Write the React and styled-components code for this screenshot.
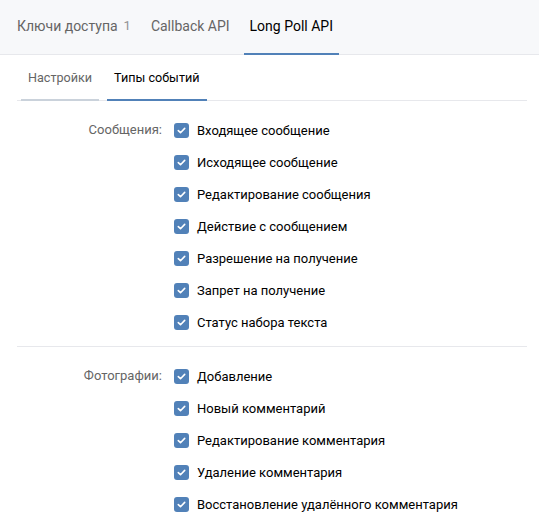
import React from "react";
import styled, { createGlobalStyle } from "styled-components";

const GlobalStyle = createGlobalStyle`
	body {
		margin: 0;
		background: #fff;
		font-family: Roboto, "Open Sans", "Liberation Sans", sans-serif;
		-webkit-font-smoothing: antialiased;
	}
`;

// Top tabs

const TopBar = styled.div`
	display: flex;
	height: 55px;
	box-sizing: border-box;
	padding-left: 11px;
	gap: 8px;
	background: #f7f8fa;
	border-bottom: 1px solid #e7e8ec;
`;

const TopTab = styled.div`
	display: flex;
	align-items: center;
	height: 55px;
	margin-bottom: -1px;
	box-sizing: border-box;
	padding: 0 6px 2px;
	border-bottom: 2px solid ${(p) => (p.$active ? "#5181b8" : "transparent")};
	font-size: 14px;
	color: ${(p) => (p.$active ? "#000" : "#656565")};
	white-space: nowrap;
`;

const Counter = styled.span`
	margin-left: 6px;
	color: #939393;
	font-size: 13px;
`;

// Sub tabs

const Content = styled.div`
	margin: 0 12px 0 17px;
`;

const SubBar = styled.div`
	display: flex;
	gap: 8px;
	padding-left: 4px;
	border-bottom: 1px solid #e7e8ec;
`;

const SubTab = styled.div`
	display: flex;
	align-items: center;
	height: 46px;
	margin-bottom: -1px;
	box-sizing: border-box;
	padding: 0 7px;
	border-bottom: 2px solid ${(p) => (p.$active ? "#5181b8" : "#cad2db")};
	font-size: 12.6px;
	color: ${(p) => (p.$active ? "#000" : "#656565")};
`;

// Event sections

const Section = styled.div`
	display: flex;
	padding: 13px 0 8px;
	& + & {
		border-top: 1px solid #e7e8ec;
	}
`;

const SectionLabel = styled.div`
	width: 145px;
	margin-right: 12px;
	text-align: right;
	font-size: 13px;
	line-height: 32px;
	color: #656565;
`;

const List = styled.div`
	display: flex;
	flex-direction: column;
`;

const Row = styled.label`
	display: flex;
	align-items: center;
	height: 32px;
	gap: 8px;
	font-size: 13px;
	color: #000;
`;

const Box = styled.span`
	display: flex;
	align-items: center;
	justify-content: center;
	width: 15px;
	height: 15px;
	border-radius: 3px;
	background: #5181b8;
`;

const Check = () => (
	<Box>
		<svg width="11" height="11" viewBox="0 0 11 11">
			<path
				d="M2.3 5.6 L4.5 7.7 L8.7 3.4"
				fill="none"
				stroke="#fff"
				strokeWidth="1.6"
				strokeLinecap="round"
				strokeLinejoin="round"
			/>
		</svg>
	</Box>
);

const sections = [
	{
		label: "Сообщения:",
		items: [
			"Входящее сообщение",
			"Исходящее сообщение",
			"Редактирование сообщения",
			"Действие с сообщением",
			"Разрешение на получение",
			"Запрет на получение",
			"Статус набора текста",
		],
	},
	{
		label: "Фотографии:",
		items: [
			"Добавление",
			"Новый комментарий",
			"Редактирование комментария",
			"Удаление комментария",
			"Восстановление удалённого комментария",
		],
	},
];

const App = () => {
	return (
		<>
			<GlobalStyle />
			<TopBar>
				<TopTab>
					Ключи доступа<Counter>1</Counter>
				</TopTab>
				<TopTab>Callback API</TopTab>
				<TopTab $active>Long Poll API</TopTab>
			</TopBar>
			<Content>
				<SubBar>
					<SubTab>Настройки</SubTab>
					<SubTab $active>Типы событий</SubTab>
				</SubBar>
				{sections.map((s) => (
					<Section key={s.label}>
						<SectionLabel>{s.label}</SectionLabel>
						<List>
							{s.items.map((item) => (
								<Row key={item}>
									<Check />
									{item}
								</Row>
							))}
						</List>
					</Section>
				))}
			</Content>
		</>
	);
};

export default App;
